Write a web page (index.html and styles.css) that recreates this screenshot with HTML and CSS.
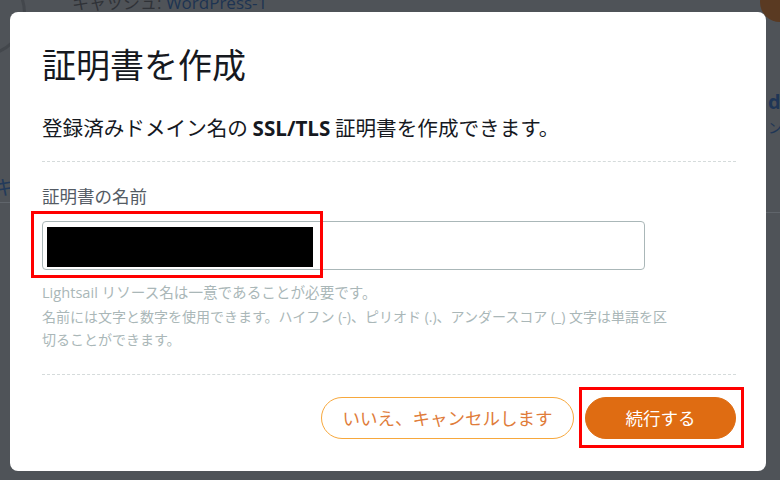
FILE: index.html
```html
<!DOCTYPE html>
<html lang="ja">
<head>
<meta charset="utf-8">
<link rel="stylesheet" href="styles.css">
</head>
<body>
<div class="page">
  <div class="bg-text bg-top">キャッシュ: <span class="bg-link">WordPress-1</span></div>
  <div class="bg-text bg-left">キ</div>
  <div class="bg-text bg-right">d<br><span class="bg-small">ン</span></div>
  <div class="bg-avatar"></div>
  <div class="bg-line bg-line-left"></div>
  <div class="bg-line bg-line-right"></div>
  <div class="bg-arc"></div>

  <div class="modal">
    <h1 class="title">証明書を作成</h1>
    <p class="lead">登録済みドメイン名の <b>SSL/TLS</b> 証明書を作成できます。</p>
    <hr class="divider">
    <label class="label">証明書の名前</label>
    <div class="input-wrap">
      <div class="input">
        <div class="redacted"></div>
      </div>
      <div class="mark mark-input"></div>
    </div>
    <p class="help"><span class="help-first">Lightsail リソース名は一意であることが必要です。</span><br>名前には文字と数字を使用できます。ハイフン (-)、ピリオド (.)、アンダースコア (_) 文字は単語を区<br>切ることができます。</p>
    <hr class="divider divider-bottom">
    <div class="actions">
      <button class="btn btn-cancel">いいえ、キャンセルします</button>
      <div class="btn-wrap">
        <button class="btn btn-primary">続行する</button>
        <div class="mark mark-btn"></div>
      </div>
    </div>
  </div>
</div>
</body>
</html>
```
FILE: styles.css
```css
* { box-sizing: border-box; }
html, body { margin: 0; padding: 0; }
body {
  width: 780px;
  height: 480px;
  overflow: hidden;
  background: #4f5358;
  font-family: "Noto Sans CJK JP", "Open Sans", sans-serif;
}
.page {
  position: relative;
  width: 780px;
  height: 480px;
  padding: 12px 14px 9px 10px;
}
.bg-text {
  position: absolute;
  color: #2c3f58;
  font-family: "Open Sans", "Noto Sans CJK JP", sans-serif;
}
.bg-top { left: 72px; top: -11px; font-size: 17px; color: #2f3237; white-space: nowrap; }
.bg-link { color: #1d3352; }
.bg-left { left: -6px; top: 172px; font-size: 20px; color: #233a5a; }
.bg-right { left: 768px; top: 90px; font-size: 20px; font-weight: 700; color: #1f3656; line-height: 24px; }
.bg-small { font-weight: 400; font-size: 14px; }
.bg-avatar {
  position: absolute;
  left: 760px; top: -18px;
  width: 40px; height: 40px;
  border-radius: 50%;
  background: #5a3a22;
}
.bg-line { position: absolute; height: 1px; background: #60656b; }
.bg-line-left { left: 0; top: 202px; width: 12px; }
.bg-line-right { left: 766px; top: 212px; width: 14px; }
.bg-arc {
  position: absolute;
  left: -60px; top: -30px;
  width: 86px; height: 86px;
  border: 3px solid #43474c;
  border-radius: 50%;
}
.modal {
  position: relative;
  height: 459px;
  background: #fff;
  border-radius: 8px;
  padding: 32px 30px 32px 32px;
  display: flex;
  flex-direction: column;
}
.title {
  margin: 0;
  font-size: 34px;
  line-height: 40px;
  font-weight: 400;
  color: #16191f;
}
.lead {
  margin: 31px 0 0;
  font-size: 20.6px;
  line-height: 24px;
  color: #16191f;
}
.lead b { font-family: "Open Sans", sans-serif; font-weight: 700; }
.divider {
  margin: 21px 0 0;
  border: 0;
  border-top: 1px dashed #d5dbdb;
  height: 0;
}
.label {
  margin-top: 24px;
  font-size: 17.5px;
  line-height: 20px;
  color: #545b64;
}
.input-wrap {
  position: relative;
  margin-top: 15px;
  width: 603px;
}
.input {
  height: 49px;
  border: 1px solid #aab7b8;
  border-radius: 4px;
  padding: 5px 4px;
}
.redacted {
  width: 266px;
  height: 40px;
  background: #000;
}
.mark {
  position: absolute;
  border: 3px solid #ff0000;
}
.mark-input { left: -11px; top: -10px; width: 292px; height: 67px; }
.help {
  margin: 11px 0 0;
  font-size: 14px;
  line-height: 23.5px;
  color: #aab7b8;
  white-space: nowrap;
  font-family: "Open Sans", "Noto Sans CJK JP", sans-serif;
}
.help-first { font-size: 14.6px; }
.divider-bottom { margin-top: 22px; }
.actions {
  margin-top: 22px;
  display: flex;
  justify-content: flex-end;
  gap: 11px;
}
.btn {
  height: 42px;
  border-radius: 21px;
  font-family: "Noto Sans CJK JP", sans-serif;
  font-size: 17.5px;
  padding: 0 10px;
  cursor: pointer;
  white-space: nowrap;
}
.btn-cancel {
  width: 253px;
  background: #fff;
  border: 1px solid #f7a83d;
  color: #e07c3a;
}
.btn-wrap { position: relative; }
.btn-primary {
  width: 151px;
  background: #df6c12;
  border: 1px solid #df6c12;
  color: #fff;
}
.mark-btn { left: -6px; top: -10px; width: 165px; height: 61px; }
```
